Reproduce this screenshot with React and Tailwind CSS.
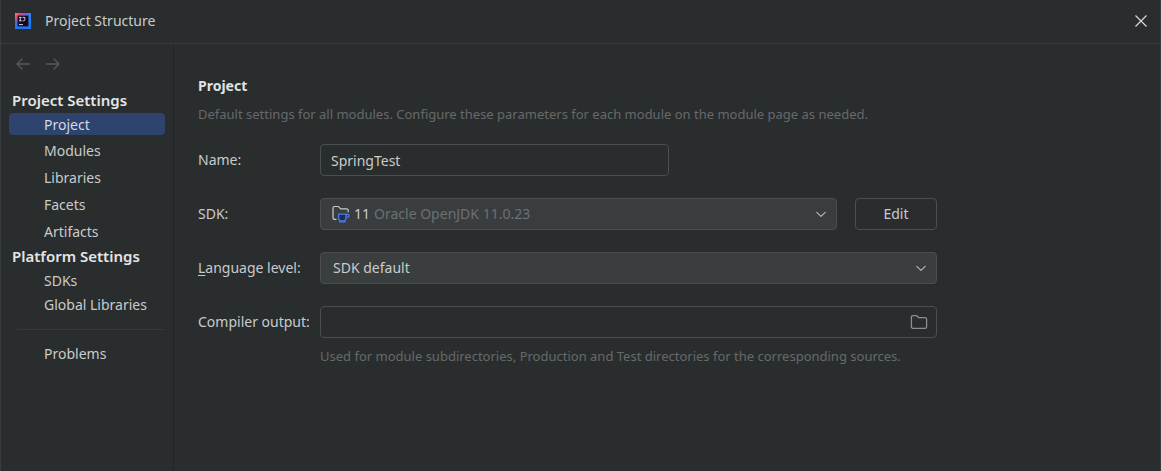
import React, { useState } from "react";

function IdeaLogo() {
  return (
    <svg width="16" height="16" viewBox="0 0 16 16" aria-hidden="true">
      <defs>
        <linearGradient id="idea-edge" x1="0" y1="0" x2="1" y2="0.6">
          <stop offset="0" stopColor="#f9804a" />
          <stop offset="0.25" stopColor="#e0427e" />
          <stop offset="0.5" stopColor="#8a55d8" />
          <stop offset="0.75" stopColor="#2f80f0" />
          <stop offset="1" stopColor="#2585f0" />
        </linearGradient>
        <linearGradient id="idea-left" x1="0" y1="0" x2="0" y2="1">
          <stop offset="0.3" stopColor="#2277ee" stopOpacity="0" />
          <stop offset="0.7" stopColor="#2377ea" />
        </linearGradient>
      </defs>
      <rect width="16" height="16" fill="url(#idea-edge)" />
      <rect width="16" height="16" fill="url(#idea-left)" />
      <rect x="2.6" y="2.6" width="10.8" height="10.8" fill="#150a22" />
      <path d="M4 4.4h2.6M5.3 4.4v3.4M4 7.8h2.6M7.6 4.4h2.2v2.3q0 1.1-1.1 1.1H7.6" fill="none" stroke="#e8e2ec" strokeWidth="0.9" />
      <path d="M4 11.6h4" stroke="#e8e2ec" strokeWidth="0.9" />
    </svg>
  );
}

function Arrow({ back }) {
  return (
    <svg width="16" height="16" viewBox="0 0 16 16" fill="none" stroke="#565a5c" strokeWidth="1.3" strokeLinecap="round" strokeLinejoin="round" aria-hidden="true">
      <path d={back ? "M14.5 8H2M7 3 2 8l5 5" : "M1.5 8H14M9 3l5 5-5 5"} />
    </svg>
  );
}

function Chevron() {
  return (
    <svg className="pointer-events-none col-start-1 row-start-1 mr-2.5 self-center justify-self-end" width="12" height="12" viewBox="0 0 12 12" fill="none" stroke="#adb1b3" strokeWidth="1.3" strokeLinecap="round" strokeLinejoin="round" aria-hidden="true">
      <path d="M1.8 4.4 6 8.4l4.2-4" />
    </svg>
  );
}

function FolderIcon() {
  return (
    <svg width="18" height="16" viewBox="0 0 18 16" fill="none" stroke="#8b8f91" strokeWidth="1.3" strokeLinejoin="round" aria-hidden="true">
      <path d="M1.4 3.2q0-1.6 1.6-1.6h3.2q.5 0 .9.4L8.800 3.700h6.200q1.600 0 1.600 1.600v7.400q0 1.600-1.600 1.600H3q-1.600 0-1.600-1.600z" />
    </svg>
  );
}

function SdkIcon() {
  return (
    <svg width="18" height="18" viewBox="0 0 18 18" fill="none" aria-hidden="true">
      <path d="M4.500 14.300H2.600q-1.600 0-1.600-1.600V3.100q0-1.600 1.600-1.600h3.300q.5 0 .9.4l1.800 1.900h6q1.600 0 1.600 1.600v1.900" stroke="#c9cccd" strokeWidth="1.2" strokeLinejoin="round" />
      <path d="M6.600 9.200h7.400v3.200q0 3.600-3.700 3.600t-3.700-3.600z" fill="#1d2c50" stroke="#4a7ce0" strokeWidth="1.300" />
      <path d="M14 9.400h1.400q1.700 0 1.700 1.400t-1.700 1.500H14M6.800 16.900h7" stroke="#4a7ce0" strokeWidth="1.300" />
    </svg>
  );
}

const focusRing = "outline-none focus-visible:ring-1 focus-visible:ring-[#3574f0]";

function NavItem({ label, tall, current, onSelect }) {
  const active = current === label;
  return (
    <li className={active ? "pb-0.5" : ""}>
      <button
        type="button"
        aria-current={active ? "page" : undefined}
        onClick={() => onSelect(label)}
        className={`flex w-full items-center rounded pl-[35px] text-left ${focusRing} ${
          active ? "h-[22px] bg-[#2e436e] pt-0.5 text-[#d3d8e2]" : tall ? "h-[27px]" : "h-6"
        }`}
      >
        {label}
      </button>
    </li>
  );
}

function NavHeading({ children }) {
  return <h2 className="flex h-6 items-center pl-[3px] text-[15px] font-semibold whitespace-nowrap text-[#e3e5e6]">{children}</h2>;
}

export default function App() {
  const [page, setPage] = useState("Project");
  const [name, setName] = useState("SpringTest");
  const [output, setOutput] = useState("");
  const nav = { current: page, onSelect: setPage };

  return (
    <div className="flex min-h-screen flex-col border-x border-[#383c3e] bg-[#2a2d2e] font-['Noto_Sans','Open_Sans',sans-serif] text-sm text-[#c8cbcc]">
      <header className="flex h-11 items-center border-b border-[#383c3e] pr-3 pb-0.5 pl-3.5">
        <IdeaLogo />
        <h1 className="ml-3.5 flex-1">Project Structure</h1>
        <button type="button" aria-label="Close" className={focusRing}>
          <svg width="14" height="14" viewBox="0 0 14 14" stroke="#d8dadb" strokeWidth="1.2" aria-hidden="true">
            <path d="M1.500 1.500l11 11M12.500 1.500l-11 11" />
          </svg>
        </button>
      </header>

      <div className="flex flex-1">
        <nav aria-label="Settings" className="w-[173px] shrink-0 border-r border-[#222526] pr-2 pl-2">
          <div className="flex h-[45px] items-center gap-3.5 pb-1.5 pl-1.5">
            <button type="button" aria-label="Back" disabled><Arrow back /></button>
            <button type="button" aria-label="Forward" disabled><Arrow /></button>
          </div>
          <NavHeading>Project Settings</NavHeading>
          <ul>
            <NavItem label="Project" tall {...nav} />
            <NavItem label="Modules" tall {...nav} />
            <NavItem label="Libraries" tall {...nav} />
            <NavItem label="Facets" tall {...nav} />
            <NavItem label="Artifacts" tall {...nav} />
          </ul>
          <NavHeading>Platform Settings</NavHeading>
          <ul>
            <NavItem label="SDKs" {...nav} />
            <NavItem label="Global Libraries" {...nav} />
          </ul>
          <hr className="my-3 ml-2 border-[#36393b]" />
          <ul>
            <NavItem label="Problems" {...nav} />
          </ul>
        </nav>

        <main className="min-w-0 flex-1 px-6 pt-8">
          <div className="max-w-[739px]">
            <h2 className="leading-5 font-bold text-[#dfe1e2]">Project</h2>
            <p className="mt-2 text-[13px] leading-5 text-[#66696b]">
              Default settings for all modules. Configure these parameters for each module on the module page as needed.
            </p>

            <form className="mt-5 grid grid-cols-[122px_1fr] items-center gap-y-[22px]" onSubmit={(e) => e.preventDefault()}>
              <label htmlFor="name">Name:</label>
              <input
                id="name"
                value={name}
                onChange={(e) => setName(e.target.value)}
                className={`h-8 w-[349px] max-w-full rounded border border-[#4a4e50] bg-transparent px-2.5 ${focusRing}`}
              />

              <label htmlFor="sdk">SDK:</label>
              <div className="flex gap-[18px]">
                <div className="grid flex-1">
                  <select id="sdk" className={`col-start-1 row-start-1 h-8 w-full appearance-none rounded border border-[#4a4e50] bg-[#3a3d3f] text-transparent ${focusRing}`}>
                    <option>11 Oracle OpenJDK 11.0.23</option>
                  </select>
                  <span aria-hidden="true" className="pointer-events-none col-start-1 row-start-1 flex items-center gap-1 pl-3">
                    <SdkIcon />
                    <span>11</span>
                    <span className="text-[#6c7072]">Oracle OpenJDK 11.0.23</span>
                  </span>
                  <Chevron />
                </div>
                <button type="button" className={`h-8 w-[82px] rounded border border-[#4a4e50] ${focusRing}`}>Edit</button>
              </div>

              <label htmlFor="level"><span className="underline underline-offset-2">L</span>anguage level:</label>
              <div className="grid">
                <select id="level" className={`col-start-1 row-start-1 h-8 w-full appearance-none rounded border border-[#4a4e50] bg-[#3a3e3f] px-3 ${focusRing}`}>
                  <option>SDK default</option>
                </select>
                <Chevron />
              </div>

              <label htmlFor="output">Compiler output:</label>
              <div className="flex h-8 items-center rounded border border-[#4a4e50] pr-2 focus-within:ring-1 focus-within:ring-[#3574f0]">
                <input
                  id="output"
                  aria-describedby="output-hint"
                  value={output}
                  onChange={(e) => setOutput(e.target.value)}
                  className="h-full min-w-0 flex-1 bg-transparent px-2.5 outline-none"
                />
                <button type="button" aria-label="Browse"><FolderIcon /></button>
              </div>
            </form>
            <p id="output-hint" className="mt-2 ml-[122px] text-[13px] leading-5 text-[#66696b]">
              Used for module subdirectories, Production and Test directories for the corresponding sources.
            </p>
          </div>
        </main>
      </div>
    </div>
  );
}
